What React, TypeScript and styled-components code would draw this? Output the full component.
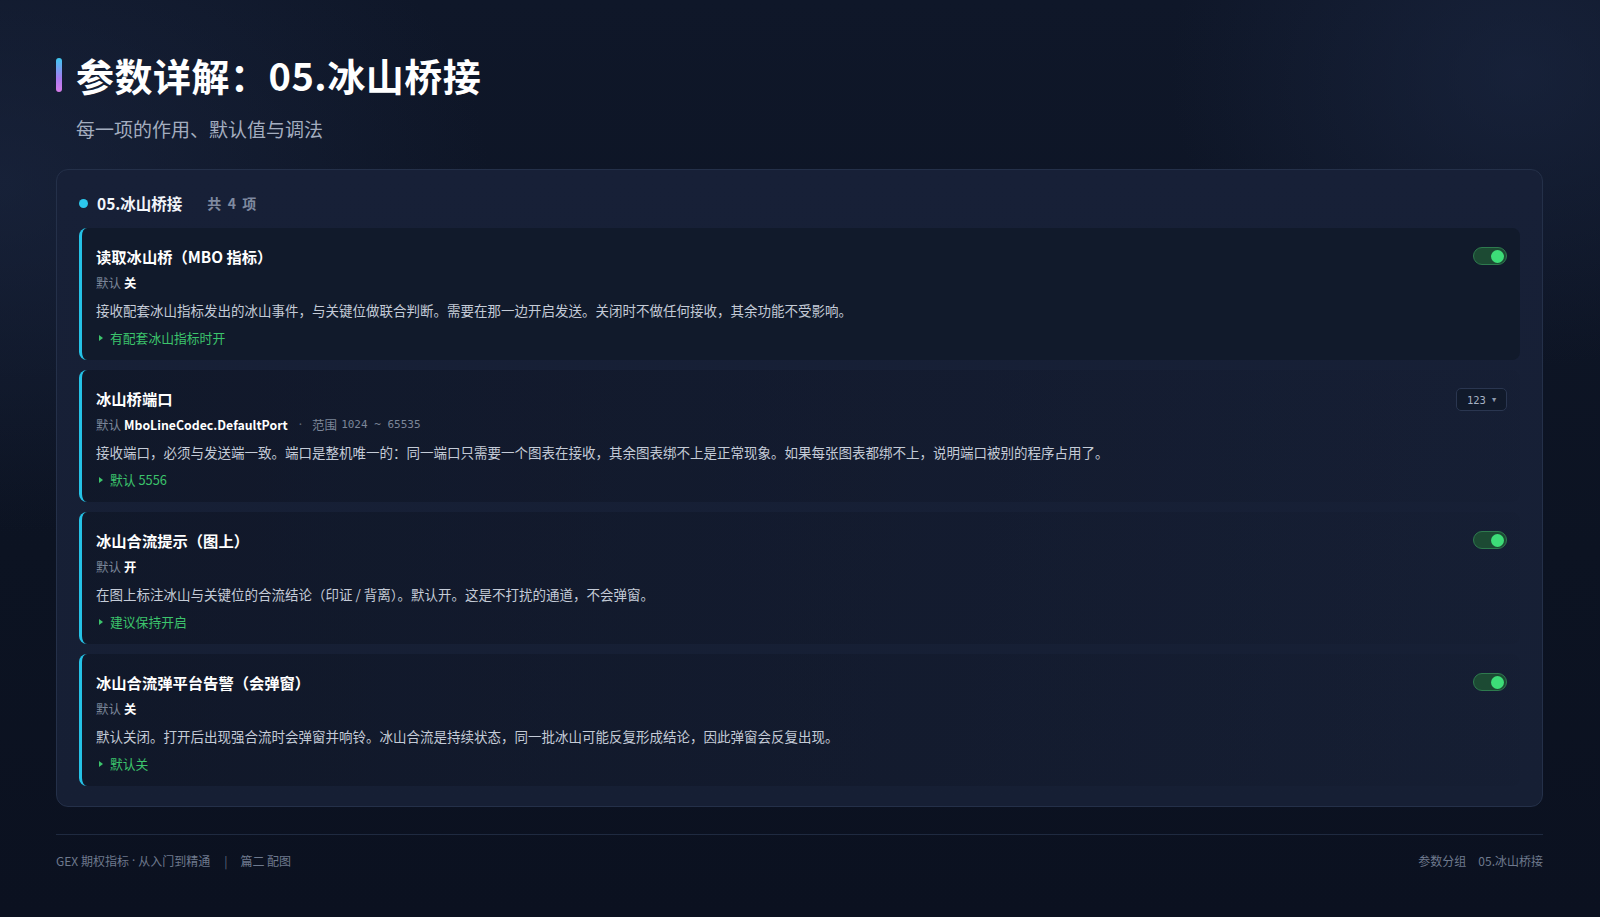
import React from "react";
import styled, { createGlobalStyle } from "styled-components";

const Global = createGlobalStyle`
  * { box-sizing: border-box; }
  html, body { margin: 0; padding: 0; }
  body {
    width: 1600px;
    min-height: 917px;
    background:
      radial-gradient(ellipse 700px 500px at 0% 20%, rgba(30, 42, 70, 0.55), transparent 70%),
      radial-gradient(ellipse 500px 420px at 95% 8%, rgba(28, 40, 68, 0.6), transparent 70%),
      linear-gradient(180deg, #0f1729 0%, #0c1322 60%, #0b1120 100%);
    font-family: "Noto Sans CJK SC", "Noto Sans", sans-serif;
    color: #e8edf5;
  }
`;

const Page = styled.div`
  width: 1600px;
  height: 917px;
  padding: 51px 57px 0 56px;
  display: flex;
  flex-direction: column;
`;

const TitleRow = styled.div`
  display: flex;
  align-items: center;
  gap: 14px;
  height: 48px;
`;

const Accent = styled.span`
  width: 6px;
  height: 34px;
  border-radius: 3px;
  background: linear-gradient(180deg, #3cc8f0 0%, #a77bf0 60%, #d77ce8 100%);
`;

const Title = styled.h1`
  margin: 0;
  font-size: 38px;
  line-height: 48px;
  font-weight: 700;
  color: #ffffff;
  letter-spacing: 0.5px;
`;

const Subtitle = styled.div`
  margin: 18px 0 0 20px;
  font-size: 19px;
  line-height: 24px;
  color: #a3adbf;
`;

const Panel = styled.section`
  margin-top: 28px;
  border: 1px solid #243049;
  border-radius: 12px;
  background: linear-gradient(180deg, #172037 0%, #161f34 100%);
  padding: 21px 22px 20px 22px;
  display: flex;
  flex-direction: column;
`;

const SectionHead = styled.div`
  display: flex;
  align-items: center;
  height: 24px;
`;

const Dot = styled.span`
  width: 9px;
  height: 9px;
  border-radius: 50%;
  background: #2cc7ec;
  margin-right: 9px;
`;

const SectionName = styled.span`
  font-size: 15.5px;
  font-weight: 700;
  color: #f2f5fa;
`;

const SectionCount = styled.span`
  margin-left: 25px;
  font-size: 14px;
  font-weight: 700;
  letter-spacing: 0.6px;
  word-spacing: 2px;
  color: #7f8aa0;
`;

const List = styled.div`
  margin-top: 13px;
  display: flex;
  flex-direction: column;
  gap: 10px;
`;

const Card = styled.div<{ $active?: boolean }>`
  height: 132px;
  border-left: 3px solid #25c2e6;
  border-radius: 8px;
  background: ${(p) =>
    p.$active
      ? "#111a2b"
      : "linear-gradient(90deg, rgba(12,18,32,0.55) 0%, rgba(14,20,36,0.35) 60%, rgba(18,26,44,0.15) 100%)"};
  padding: 17px 13px 12px 14px;
  display: flex;
  align-items: flex-start;
`;

const CardBody = styled.div`
  flex: 1;
  display: flex;
  flex-direction: column;
`;

const CardTitle = styled.div`
  font-size: 15.3px;
  line-height: 22px;
  font-weight: 700;
  color: #ffffff;
`;

const DefaultLine = styled.div`
  margin-top: 6px;
  font-size: 12.5px;
  line-height: 20px;
  color: #7c8699;
  display: flex;
  align-items: center;
`;

const DefaultValue = styled.b`
  margin-left: 3px;
  font-weight: 700;
  color: #ffffff;
  font-size: 12.3px;
`;

const Sep = styled.span`
  margin: 0 10px 0 11px;
  font-family: "Noto Sans", sans-serif;
  color: #5e687b;
`;

const Mono = styled.span`
  margin-left: 4px;
  font-family: "DejaVu Sans Mono", "Liberation Mono", monospace;
  font-size: 11px;
  color: #7c8699;
`;

const Desc = styled.div`
  margin-top: 6px;
  font-size: 13.5px;
  line-height: 22px;
  color: #c4cbd7;
`;

const Tip = styled.div`
  margin-top: 7px;
  font-size: 12.8px;
  line-height: 20px;
  color: #3cc46c;
  display: flex;
  align-items: center;
`;

const TipMark = styled.span`
  width: 0;
  height: 0;
  border-top: 3px solid transparent;
  border-bottom: 3px solid transparent;
  border-left: 4px solid #3cc46c;
  margin: 0 7px 0 3px;
`;

const Toggle = styled.div<{ $on?: boolean }>`
  margin-top: 2px;
  width: 34px;
  height: 18px;
  border-radius: 9px;
  background: #1c4a33;
  border: 1px solid #2e7a4e;
  display: flex;
  align-items: center;
  justify-content: ${(p) => (p.$on ? "flex-end" : "flex-start")};
  padding: 0 2px;
`;

const Knob = styled.span`
  width: 13px;
  height: 13px;
  border-radius: 50%;
  background: #3ddc78;
`;

const NumBox = styled.div`
  margin-top: 1px;
  width: 51px;
  height: 23px;
  border-radius: 5px;
  border: 1px solid #2a3650;
  background: #111a2b;
  display: flex;
  align-items: center;
  justify-content: center;
  gap: 6px;
  font-family: "DejaVu Sans Mono", "Liberation Mono", monospace;
  font-size: 10.5px;
  color: #a6b1c4;
`;

const Caret = styled.span`
  font-size: 7px;
  color: #8d98ab;
`;

const Footer = styled.footer`
  margin-top: 27px;
  border-top: 1px solid #1f2a40;
  height: 50px;
  display: flex;
  align-items: center;
  justify-content: space-between;
  padding-top: 2px;
  font-size: 12px;
  color: #6e798d;
`;

const FootLeft = styled.div`
  display: flex;
  align-items: center;
`;

const MidDot = styled.span`
  font-family: "Noto Sans", sans-serif;
  margin: 0 3px;
`;

const Bar = styled.span`
  margin: 0 13px 0 14px;
  color: #5d687c;
`;

const FootRight = styled.div`
  display: flex;
  align-items: center;
  gap: 12px;
`;

type Item = {
  title: string;
  def: string;
  range?: string;
  desc: string;
  tip: string;
  control: "on" | "num";
  active?: boolean;
};

const items: Item[] = [
  {
    title: "读取冰山桥（MBO 指标）",
    def: "关",
    desc: "接收配套冰山指标发出的冰山事件，与关键位做联合判断。需要在那一边开启发送。关闭时不做任何接收，其余功能不受影响。",
    tip: "有配套冰山指标时开",
    control: "on",
    active: true,
  },
  {
    title: "冰山桥端口",
    def: "MboLineCodec.DefaultPort",
    range: "1024 ~ 65535",
    desc: "接收端口，必须与发送端一致。端口是整机唯一的：同一端口只需要一个图表在接收，其余图表绑不上是正常现象。如果每张图表都绑不上，说明端口被别的程序占用了。",
    tip: "默认 5556",
    control: "num",
  },
  {
    title: "冰山合流提示（图上）",
    def: "开",
    desc: "在图上标注冰山与关键位的合流结论（印证 / 背离）。默认开。这是不打扰的通道，不会弹窗。",
    tip: "建议保持开启",
    control: "on",
  },
  {
    title: "冰山合流弹平台告警（会弹窗）",
    def: "关",
    desc: "默认关闭。打开后出现强合流时会弹窗并响铃。冰山合流是持续状态，同一批冰山可能反复形成结论，因此弹窗会反复出现。",
    tip: "默认关",
    control: "on",
  },
];

export default function App() {
  return (
    <>
      <Global />
      <Page>
        <TitleRow>
          <Accent />
          <Title>参数详解：05.冰山桥接</Title>
        </TitleRow>
        <Subtitle>每一项的作用、默认值与调法</Subtitle>
        <Panel>
          <SectionHead>
            <Dot />
            <SectionName>05.冰山桥接</SectionName>
            <SectionCount>共 4 项</SectionCount>
          </SectionHead>
          <List>
            {items.map((it) => (
              <Card key={it.title} $active={it.active}>
                <CardBody>
                  <CardTitle>{it.title}</CardTitle>
                  <DefaultLine>
                    默认<DefaultValue>{it.def}</DefaultValue>
                    {it.range && (
                      <>
                        <Sep>·</Sep>范围<Mono>{it.range}</Mono>
                      </>
                    )}
                  </DefaultLine>
                  <Desc>{it.desc}</Desc>
                  <Tip>
                    <TipMark />
                    {it.tip}
                  </Tip>
                </CardBody>
                {it.control === "num" ? (
                  <NumBox>
                    123<Caret>▼</Caret>
                  </NumBox>
                ) : (
                  <Toggle $on>
                    <Knob />
                  </Toggle>
                )}
              </Card>
            ))}
          </List>
        </Panel>
        <Footer>
          <FootLeft>
            GEX 期权指标<MidDot>·</MidDot>从入门到精通<Bar>|</Bar>篇二 配图
          </FootLeft>
          <FootRight>
            <span>参数分组</span>
            <span>05.冰山桥接</span>
          </FootRight>
        </Footer>
      </Page>
    </>
  );
}
